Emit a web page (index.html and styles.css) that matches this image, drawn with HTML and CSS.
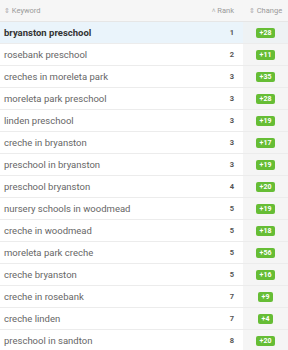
FILE: index.html
```html
<!DOCTYPE html>
<html>
<head>
<meta charset="utf-8">
<link rel="stylesheet" href="styles.css">
</head>
<body>
<table class="kw">
  <thead>
    <tr>
      <th class="c-kw"><span class="sort">&#8661;</span> Keyword</th>
      <th class="c-rank"><span class="sort">&#708;</span> Rank</th>
      <th class="c-chg"><span class="sort">&#8661;</span> Change</th>
    </tr>
  </thead>
  <tbody>
    <tr class="active"><td class="c-kw">bryanston preschool</td><td class="c-rank">1</td><td class="c-chg"><span class="badge">+28</span></td></tr>
    <tr><td class="c-kw">rosebank preschool</td><td class="c-rank">2</td><td class="c-chg"><span class="badge">+11</span></td></tr>
    <tr><td class="c-kw">creches in moreleta park</td><td class="c-rank">3</td><td class="c-chg"><span class="badge">+35</span></td></tr>
    <tr><td class="c-kw">moreleta park preschool</td><td class="c-rank">3</td><td class="c-chg"><span class="badge">+28</span></td></tr>
    <tr><td class="c-kw">linden preschool</td><td class="c-rank">3</td><td class="c-chg"><span class="badge">+19</span></td></tr>
    <tr><td class="c-kw">creche in bryanston</td><td class="c-rank">3</td><td class="c-chg"><span class="badge">+17</span></td></tr>
    <tr><td class="c-kw">preschool in bryanston</td><td class="c-rank">3</td><td class="c-chg"><span class="badge">+19</span></td></tr>
    <tr><td class="c-kw">preschool bryanston</td><td class="c-rank">4</td><td class="c-chg"><span class="badge">+20</span></td></tr>
    <tr><td class="c-kw">nursery schools in woodmead</td><td class="c-rank">5</td><td class="c-chg"><span class="badge">+19</span></td></tr>
    <tr><td class="c-kw">creche in woodmead</td><td class="c-rank">5</td><td class="c-chg"><span class="badge">+18</span></td></tr>
    <tr><td class="c-kw">moreleta park creche</td><td class="c-rank">5</td><td class="c-chg"><span class="badge">+56</span></td></tr>
    <tr><td class="c-kw">creche bryanston</td><td class="c-rank">5</td><td class="c-chg"><span class="badge">+16</span></td></tr>
    <tr><td class="c-kw">creche in rosebank</td><td class="c-rank">7</td><td class="c-chg"><span class="badge">+9</span></td></tr>
    <tr><td class="c-kw">creche linden</td><td class="c-rank">7</td><td class="c-chg"><span class="badge">+4</span></td></tr>
    <tr><td class="c-kw">preschool in sandton</td><td class="c-rank">8</td><td class="c-chg"><span class="badge">+20</span></td></tr>
  </tbody>
</table>
</body>
</html>
```
FILE: styles.css
```css
html, body {
  margin: 0;
  padding: 0;
  background: #ffffff;
}
body {
  font-family: Roboto, "Liberation Sans", Arial, sans-serif;
  color: #666;
  overflow: hidden;
}
.kw {
  width: 288px;
  border-collapse: collapse;
  table-layout: fixed;
}
.kw th, .kw td {
  box-sizing: border-box;
  white-space: nowrap;
}
.kw th {
  height: 21px;
  padding: 0;
  font-size: 7.5px;
  font-weight: normal;
  color: #9a9a9a;
  background: #f6f6f6;
  border-bottom: 1px solid #e6e6e6;
  vertical-align: middle;
}
.kw td {
  height: 22px;
  padding: 0;
  font-size: 9.5px;
  border-bottom: 1px solid #ececec;
  vertical-align: middle;
}
.c-kw {
  text-align: left;
  padding-left: 4px !important;
}
.kw th.c-kw { width: 196px; }
.kw th.c-rank { width: 47px; }
.kw th.c-chg { width: 45px; }
.c-rank {
  text-align: right;
  padding-right: 9px !important;
}
.kw td.c-rank {
  font-weight: bold;
  font-size: 7.5px;
  color: #555;
}
.c-chg {
  text-align: center;
}
.kw td.c-chg {
  background: #f5f5f5;
}
.sort {
  font-size: 6.5px;
  color: #aaa;
}
.active td {
  background: #eaf4fb;
}
.active td.c-kw {
  font-weight: bold;
  color: #333;
}
.kw tr.active td.c-chg {
  background: #eef2f4;
}
.badge {
  display: inline-block;
  background: #66bd35;
  color: #fff;
  font-size: 7px;
  font-weight: bold;
  line-height: 10px;
  padding: 0 3.5px;
  border-radius: 2px;
}
```
